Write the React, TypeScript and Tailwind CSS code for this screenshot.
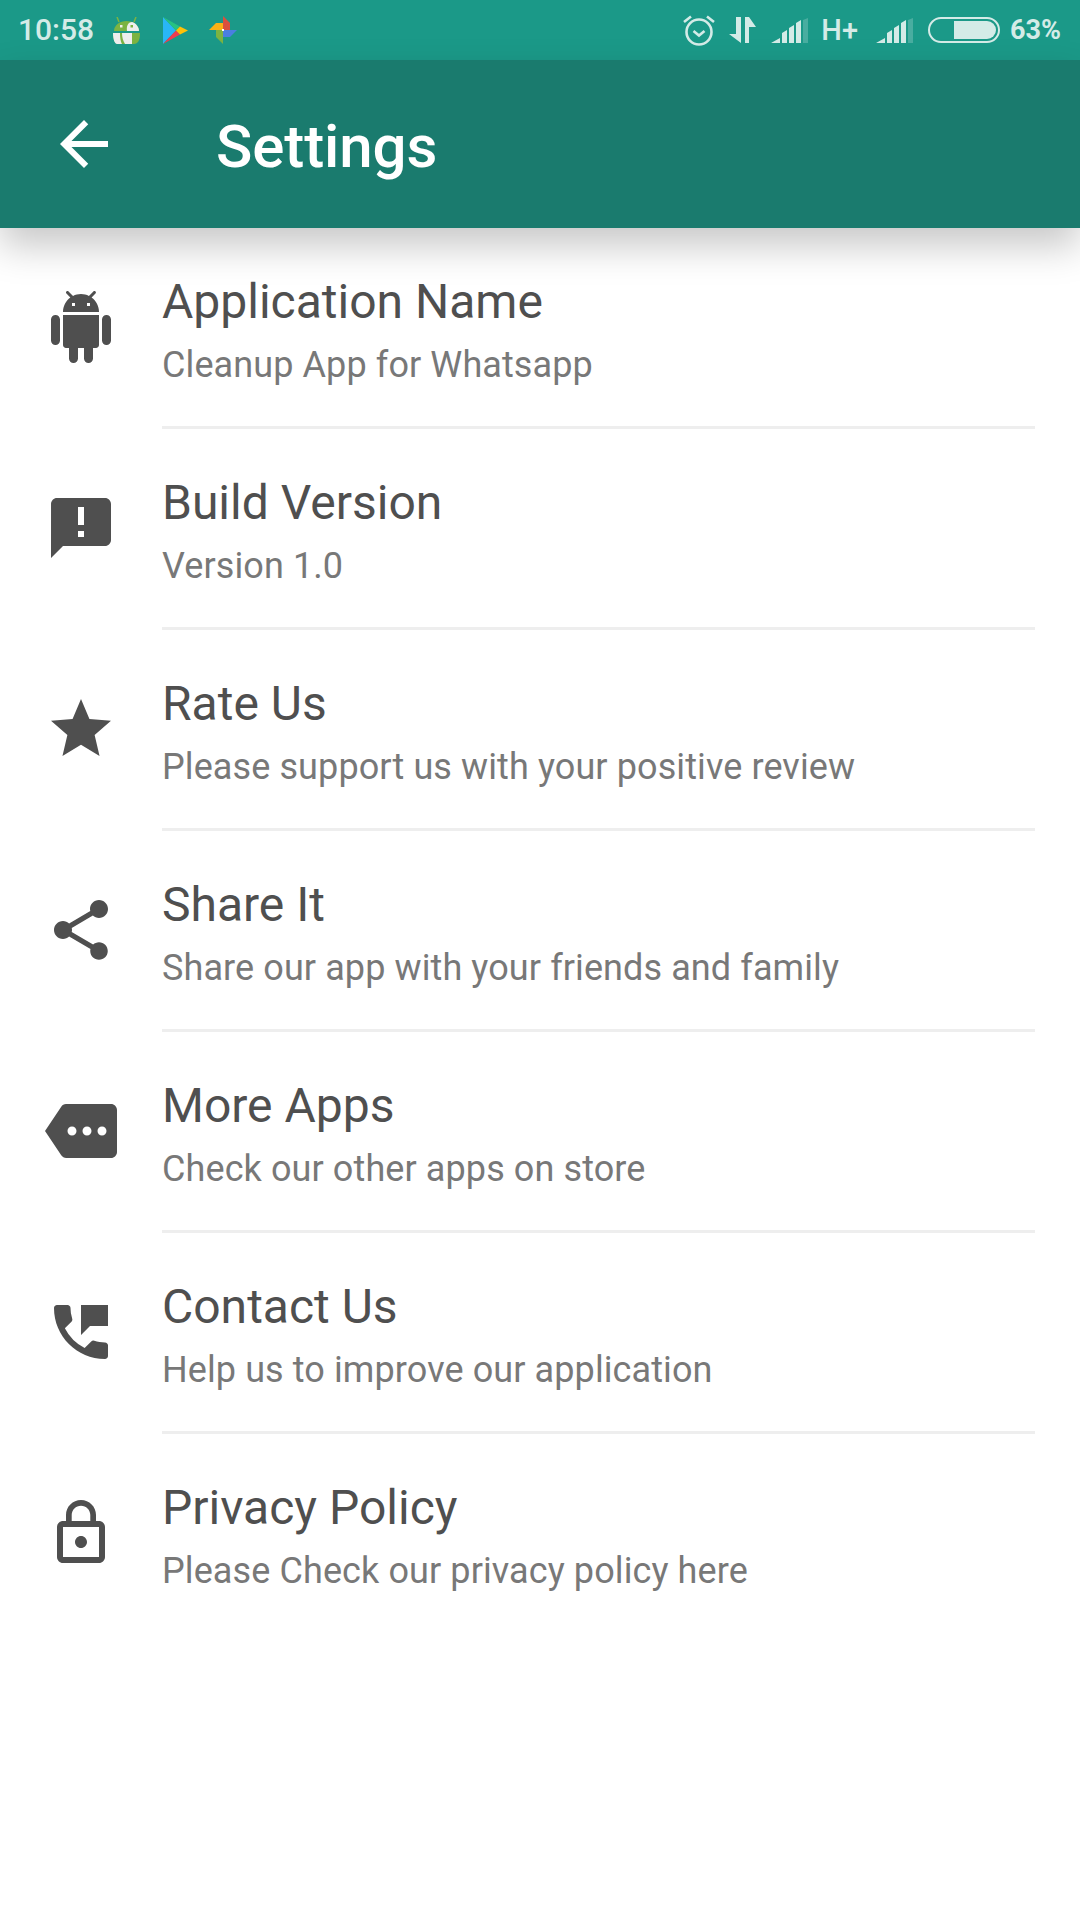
import { MdAnnouncement, MdStar, MdShare, MdMore, MdPermPhoneMsg, MdLockOutline, MdArrowBack } from "react-icons/md";

const FONT = "font-['Roboto',sans-serif]";

function AndroidIcon({ size }: { size: number }) {
  return (
    <svg width={size} height={size} viewBox="0 0 24 24" fill="currentColor">
      <path d="M6 18c0 .55.45 1 1 1h1v3.5c0 .83.67 1.5 1.5 1.5s1.5-.67 1.5-1.5V19h2v3.5c0 .83.67 1.5 1.5 1.5s1.5-.67 1.5-1.5V19h1c.55 0 1-.45 1-1V8H6v10zM3.5 8C2.67 8 2 8.67 2 9.5v7c0 .83.67 1.5 1.5 1.5S5 17.33 5 16.5v-7C5 8.67 4.33 8 3.5 8zm17 0c-.83 0-1.5.67-1.5 1.5v7c0 .83.67 1.5 1.5 1.5s1.5-.67 1.5-1.5v-7c0-.83-.67-1.5-1.5-1.5zm-4.97-5.84l1.3-1.3c.2-.2.2-.51 0-.71-.2-.2-.51-.2-.71 0l-1.48 1.48C13.85 1.23 12.95 1 12 1c-.96 0-1.86.23-2.66.63L7.85.15c-.2-.2-.51-.2-.71 0-.2.2-.2.51 0 .71l1.31 1.31C6.97 3.26 6 5.01 6 7h12c0-1.99-.97-3.75-2.47-4.84zM10 5H9V4h1v1zm5 0h-1V4h1v1z" />
    </svg>
  );
}

const rows = [
  { title: "Application Name", sub: "Cleanup App for Whatsapp", Icon: AndroidIcon },
  { title: "Build Version", sub: "Version 1.0", Icon: MdAnnouncement },
  { title: "Rate Us", sub: "Please support us with your positive review", Icon: MdStar },
  { title: "Share It", sub: "Share our app with your friends and family", Icon: MdShare },
  { title: "More Apps", sub: "Check our other apps on store", Icon: MdMore },
  { title: "Contact Us", sub: "Help us to improve our application", Icon: MdPermPhoneMsg },
  { title: "Privacy Policy", sub: "Please Check our privacy policy here", Icon: MdLockOutline },
];

function Bars() {
  return (
    <svg width="37" height="25" viewBox="0 0 37 25">
      <path d="M0 25 L9 20 V25 Z M11 25 V15 L16 12 V25 Z M18 25 V10 L23 7 V25 Z M25 25 V5 L30 2 V25 Z" fill="currentColor" />
      <path d="M32 25 V2 L37 0 V25 Z" fill="currentColor" opacity="0.25" />
    </svg>
  );
}

function StatusBar() {
  return (
    <div className="h-[60px] bg-[#1b9988] flex items-center justify-between pl-[18px] pr-[19px] text-[#d4ebe7]">
      <div className="flex items-center">
        <span className="text-[30px] font-medium w-[95px] leading-none">10:58</span>
        {/* notification icons */}
        <svg width="27" height="27" viewBox="0 0 27 27">
          <path d="M1 14 C1 8 7 4 13.5 4 C20 4 26 8 26 14 Z" fill="#7cb342" />
          <path d="M14 14 C13 8 16 5 19 5 C23 6 26 10 26 14 Z" fill="#eeeeee" />
          <rect x="7" y="8" width="2.5" height="2.5" fill="#eeeeee" />
          <rect x="17.5" y="8" width="2.5" height="2.5" fill="#7cb342" />
          <path d="M0 16 H27 C27 23 25 27 21 27 H5 C2 27 0 23 0 16 Z" fill="#7cb342" />
          <path d="M0 16 H7 C7 22 8 25 9 27 H4 C2 27 0 23 0 16 Z M9 16 H19 V27 H12 C10 24 9 20 9 16 Z" fill="#eeeeee" />
          <path d="M6 5 L4 0 M21 5 L23 0" stroke="#7cb342" strokeWidth="1.5" />
        </svg>
        <svg width="25" height="27" viewBox="0 0 25 27" className="ml-[23px]">
          <path d="M0 0 L13 13.5 L0 27 Z" fill="#29b6f6" />
          <path d="M0 0 L17 9.5 L13 13.5 Z" fill="#26c281" />
          <path d="M0 27 L17 17.5 L13 13.5 Z" fill="#ef3c50" />
          <path d="M17 9.5 L25 13.5 L17 17.5 L13 13.5 Z" fill="#ffc107" />
        </svg>
        <svg width="28" height="28" viewBox="0 0 28 28" className="ml-[21px]">
          <path d="M14 14 V0 L21 7 V14 Z" fill="#d9503f" />
          <path d="M14 14 H28 L21 21 H14 Z" fill="#4a7fe0" />
          <path d="M14 14 V28 L7 21 V14 Z" fill="#7cb342" />
          <path d="M14 14 H0 L7 7 H14 Z" fill="#fbb116" />
          <rect x="13" y="13" width="2" height="2" fill="#ffffff" />
        </svg>
      </div>
      <div className="flex items-center">
        <svg width="32" height="32" viewBox="0 0 32 32" fill="none" stroke="currentColor" strokeWidth="2.6">
          <circle cx="16" cy="18" r="12.5" />
          <path d="M10.5 17 L16 21.5 L21.5 17" />
          <path d="M1 8 L8 2.5 M31 8 L24 2.5" />
        </svg>
        <svg width="27" height="26" viewBox="0 0 27 26" className="ml-[14px]" fill="currentColor">
          <path d="M7 0 H12 V26 L0 17 H7 Z M16 0 H20 L27 10 H20 V26 H16 Z" />
        </svg>
        <div className="ml-[15px] flex"><Bars /></div>
        <span className="ml-[13px] text-[29px] font-medium leading-none">H+</span>
        <div className="ml-[18px] flex"><Bars /></div>
        <div className="ml-[15px] w-[72px] h-[26px] rounded-full border-2 border-[#d4ebe7] relative p-[2px] flex justify-end">
          <div className="w-[42px] h-full bg-[#d4ebe7] rounded-r-full" />
        </div>
        <span className="ml-[10px] text-[27px] font-bold leading-none">63%</span>
      </div>
    </div>
  );
}

export default function App() {
  return (
    <div className={`w-[1080px] h-[1920px] bg-white overflow-hidden ${FONT}`}>
      <StatusBar />
      <div className="relative h-[168px] bg-[#1a7b6e] flex items-center text-white shadow-[0_18px_36px_0_rgba(0,0,0,0.22)]">
        <MdArrowBack size={72} className="ml-[48px]" />
        <span className="ml-[96px] text-[60px] font-medium leading-none pt-[6px] tracking-[-0.1px]">Settings</span>
      </div>
      <div>
        {rows.map((r, i) => (
          <div key={r.title} className="flex h-[201px]">
            <div className="w-[162px] pl-[45px] pt-[63px] shrink-0 text-[#4f4f4f]">
              <r.Icon size={72} />
            </div>
            <div className={`w-[873px] ${i < rows.length - 1 ? "border-b-[3px] border-[#eeeeee]" : ""}`}>
              <div className="text-[48px] leading-[56px] text-[#4f4f4f] mt-[46px]">{r.title}</div>
              <div className="text-[36px] leading-[44px] text-[#787878] mt-[13px] tracking-[0.1px]">{r.sub}</div>
            </div>
          </div>
        ))}
      </div>
    </div>
  );
}
